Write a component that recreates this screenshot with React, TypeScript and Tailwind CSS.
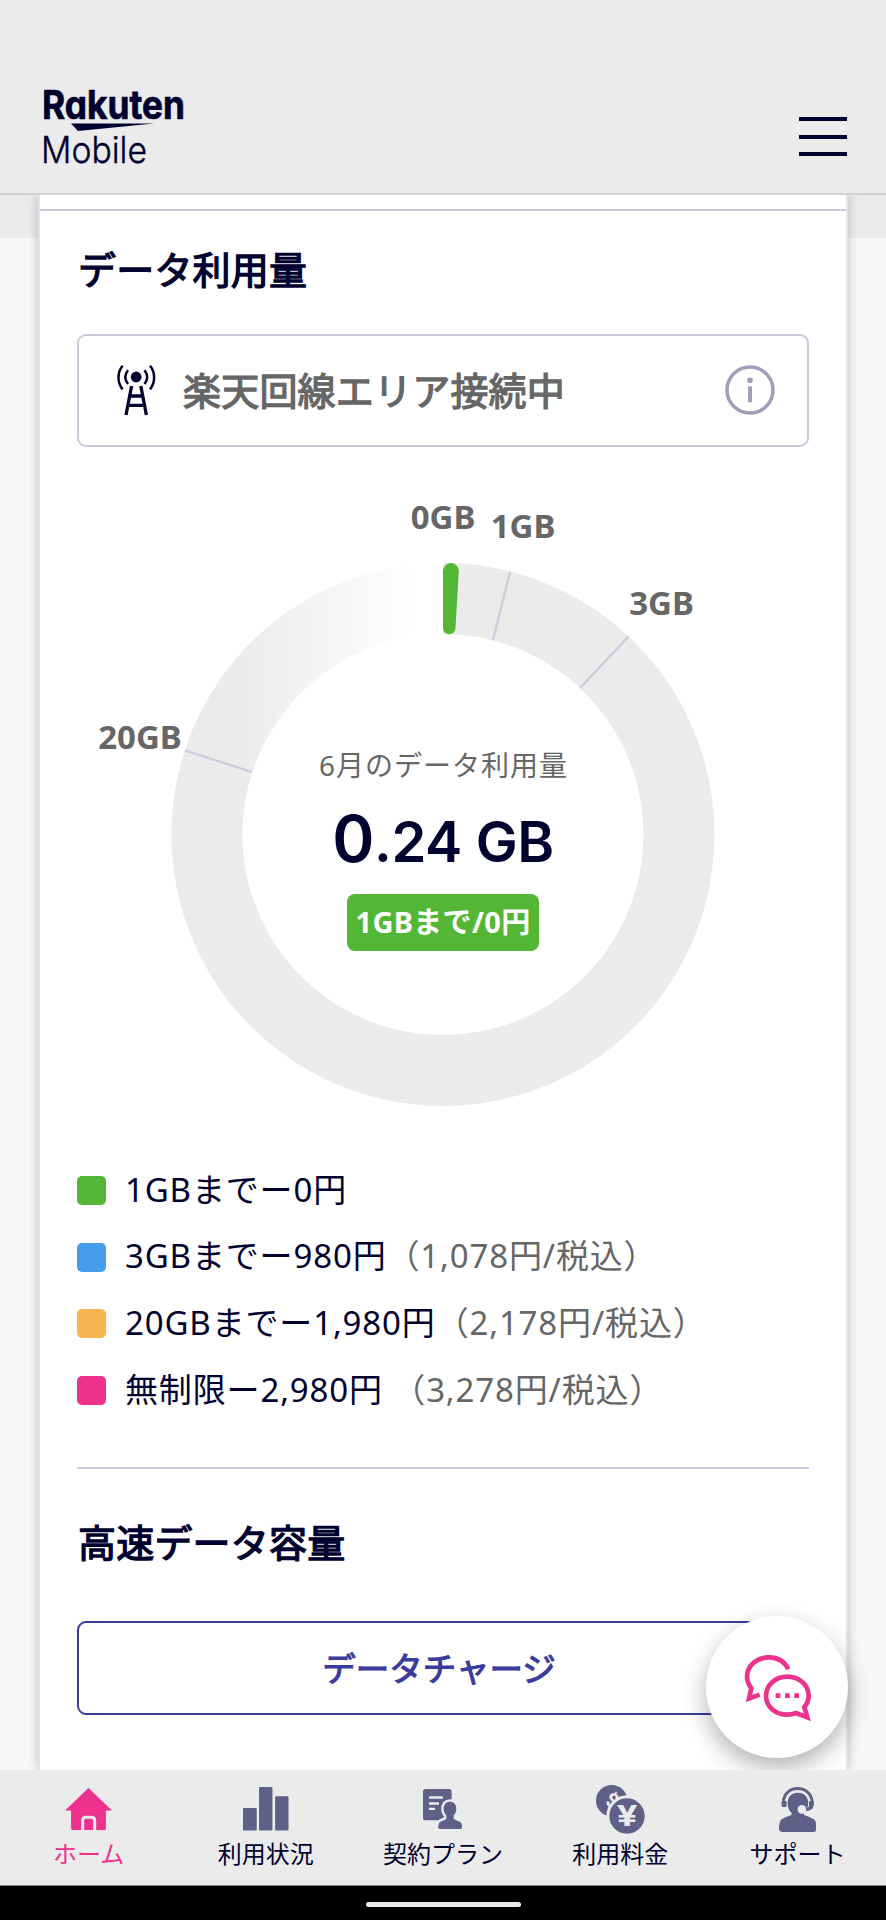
import type { ReactNode } from "react";

interface Plan {
  color: string;
  label: string;
  tax?: string;
}

const plans: Plan[] = [
  { color: "bg-[#53b735]", label: "1GBまでー0円" },
  { color: "bg-[#459eed]", label: "3GBまでー980円", tax: "（1,078円/税込）" },
  { color: "bg-[#f8b551]", label: "20GBまでー1,980円", tax: "（2,178円/税込）" },
  { color: "bg-[#ed318c]", label: "無制限ー2,980円", tax: " （3,278円/税込）" },
];

const Logo = () => (
  <svg width="176" height="114" viewBox="-16 -24 176 114" fill="#00002f">
    <text
      x="-1"
      y="33"
      fontSize="39.5"
      fontWeight="700"
      textLength="143"
      lengthAdjust="spacingAndGlyphs"
      stroke="#00002f"
      strokeWidth="0.7"
      className="font-['Inter'] [font-feature-settings:'cv11']"
    >
      Rakuten
    </text>
    <path d="M28 37.5H111L35 45Z" />
    <text
      x="-2"
      y="77"
      fontSize="37"
      fontWeight="300"
      textLength="106"
      lengthAdjust="spacingAndGlyphs"
      stroke="#00002f"
      strokeWidth="0.4"
      className="font-['Inter']"
    >
      Mobile
    </text>
  </svg>
);

const TowerIcon = () => (
  <svg width="39" height="51" viewBox="0 0 39 51" fill="none" stroke="#00002f">
    <circle cx="19.2" cy="12" r="5.4" fill="#00002f" stroke="none" />
    <path strokeWidth="3.3" d="M14.6 21 9 50M23.8 21l5.6 29M12.5 31h13.5M11 40.3h16.5" />
    <path
      strokeWidth="2.5"
      d="M5.6.8C.1 7.5.1 17.5 5.6 24.4M33 .8c5.5 6.7 5.5 16.7 0 23.6M11 5.2c-3.5 4.4-3.5 9.4 0 13.8M27.5 5.2c3.5 4.4 3.5 9.4 0 13.8"
    />
  </svg>
);

const InfoIcon = () => (
  <svg className="mb-0.5" width="50" height="50" viewBox="0 0 50 50" fill="#9f9fb9">
    <circle cx="25" cy="25" r="23" fill="none" stroke="#9f9fb9" strokeWidth="3.5" />
    <circle cx="25" cy="15.3" r="2.8" />
    <path d="M23 21.3h4v16h-4z" />
  </svg>
);

const HomeIcon = () => (
  <svg width="47" height="42.5" viewBox="0 0 140 127" fill="#ed318c">
    <path d="M70 0l70 67h-18v52q0 8-8 8H93V97q0-14-14-14H62q-14 0-14 14v30H26q-8 0-8-8V67H0z" />
    <path d="M57 127V98q0-6 6-6h15q6 0 6 6v29z" />
  </svg>
);

const UsageIcon = () => (
  <svg width="45.5" height="43.5" viewBox="0 0 136 130" fill="#5f5f87">
    <rect x="0" y="63" width="41" height="67" rx="3" />
    <rect x="48" y="0" width="40" height="130" rx="3" />
    <rect x="96" y="28" width="40" height="102" rx="3" />
  </svg>
);

const ContractIcon = () => (
  <svg width="39" height="40" viewBox="0 0 117 120" fill="#5f5f87">
    <rect width="86" height="94" rx="8" />
    <path fill="#ebebeb" d="M18 22h42v7H18zM18 40h30v7H18zM18 56h18v7H18z" />
    <path
      stroke="#ebebeb"
      strokeWidth="15"
      paintOrder="stroke"
      d="M81 38c11 0 19 8 19 21 0 10-4 16-8 20v10c2 3 17 7 21 11q4 4 4 12v3q0 5-5 5H51q-5 0-5-5v-3q0-8 4-12c4-4 18-8 20-11V79c-4-4-8-10-8-20 0-13 8-21 19-21z"
    />
  </svg>
);

const BillIcon = () => (
  <svg width="49" height="49" viewBox="0 0 147 147" fill="#5f5f87">
    <circle cx="47" cy="47" r="47" />
    <text
      x="49"
      y="66"
      fontSize="60"
      fontWeight="700"
      textAnchor="middle"
      fill="#ebebeb"
      transform="rotate(22 47 47)"
      className="font-['Roboto']"
    >
      $
    </text>
    <circle cx="93" cy="93" r="57.5" stroke="#ebebeb" strokeWidth="9" />
    <text
      x="63"
      y="124"
      fontSize="88"
      fontWeight="700"
      textLength="61"
      lengthAdjust="spacingAndGlyphs"
      fill="#ebebeb"
      className="font-['Roboto']"
    >
      ¥
    </text>
  </svg>
);

const SupportIcon = () => (
  <svg width="37.5" height="45" viewBox="0 0 113 135" fill="#5f5f87">
    <path d="M57 17c18 0 31 12 31 31 0 14-6 24-13 30v5c6 4 24 8 31 15q7 7 7 21v6q0 10-10 10H10q-10 0-10-10v-6q0-14 7-21c7-7 25-11 31-15v-5c-7-6-12-16-12-30 0-19 13-31 31-31z" />
    <path fill="none" stroke="#5f5f87" strokeWidth="9" d="M13 54V46C14 20 33 4.5 56 4.5S99 20 100 46v8" />
    <rect x="8" y="42" width="15" height="18" rx="4" />
    <path d="M90 43h14v12q0 13-15 16l-15 2v-8l12-3q5-2 5-7z" />
    <circle cx="69" cy="67" r="13" fill="#ebebeb" />
  </svg>
);

const ChatIcon = () => (
  <svg width="67" height="67" viewBox="0 0 201 201" fill="none" stroke="#ed318c" strokeWidth="14">
    <path d="M133 46C122 22 100 10 74 10 38 10 9 36 9 68c0 13 5 24 13 35l-7 31 32-12" />
    <path d="M130 68c-36 0-64 25-64 57s28 57 64 57c9 0 18-2 26-5l34 13-9-31c8-9 13-21 13-34 0-32-28-57-64-57z" />
    <path fill="#ed318c" stroke="none" d="M95 118h14v14H95zM123 118h14v14h-14zM151 118h14v14h-14z" />
  </svg>
);

const UsageChart = () => (
  <div className="relative mt-[33px] h-[640px]">
    <svg width="731" height="640" viewBox="77 480 731 640">
      <defs>
        <linearGradient id="fade" gradientUnits="userSpaceOnUse" x1="240" y1="0" x2="414" y2="0">
          <stop offset="0" stopColor="#ebebeb" />
          <stop offset="1" stopColor="#ffffff" />
        </linearGradient>
      </defs>
      <path
        fill="none"
        stroke="#ebebeb"
        strokeWidth="71"
        d="M443 598.5A236 236 0 1 1 218.5 761.5"
      />
      <path
        fill="none"
        stroke="url(#fade)"
        strokeWidth="71"
        d="M218 763A236 236 0 0 1 443 598.5"
      />
      <path stroke="#ccc9dc" strokeWidth="2.2" d="M510 572l-17 68M628.5 636.5l-48.5 51.5M185 750.5l67 21.5" />
      <path
        fill="#53b735"
        d="M443 571a7.9 7.9 0 0 1 15.8 0L455.5 628a6.25 6.25 0 0 1-12.5 0z"
      />
      <g
        fill="#666666"
        fontSize="33"
        fontWeight="700"
        textAnchor="middle"
        className="font-['Noto_Sans']"
      >
        <text x="443" y="528.5">0GB</text>
        <text x="523" y="538">1GB</text>
        <text x="661.5" y="614.5">3GB</text>
        <text x="140" y="748.5">20GB</text>
      </g>
    </svg>
    <div className="absolute inset-x-0 top-[262px] flex flex-col items-center">
      <p className="h-12 pl-px text-[28px] leading-[47px] tracking-[1px] text-[#666]">
        6月のデータ利用量
      </p>
      <p className="mt-3 h-[72px] font-['Inter'] text-[56px] leading-[74px] font-semibold tracking-[-0.4px] whitespace-nowrap">
        <span className="text-[64px]">0</span>.24 GB
      </p>
      <p className="mt-5 flex h-[57px] w-[192px] items-center justify-center rounded-lg bg-[#53b735] pb-0.5 text-[29px] font-bold tracking-[0.3px] text-white">
        1GBまで/0円
      </p>
    </div>
  </div>
);

interface NavItemProps {
  label: string;
  active?: boolean;
  children: ReactNode;
}
const NavItem = ({ label, active, children }: NavItemProps) => (
  <a className={`flex flex-col items-center ${active ? "text-[#ed318c]" : ""}`}>
    <span className="mt-[13px] flex h-[52px] items-center justify-center">{children}</span>
    <span className="mt-0.5 text-2xl leading-[34px]">{label}</span>
  </a>
);

export default function App() {
  return (
    <div className="relative flex h-[1920px] w-[886px] flex-col overflow-hidden bg-[#f7f7f7] font-['Noto_Sans','Noto_Sans_CJK_JP',sans-serif] text-[#00002f]">
      <header className="flex h-[195px] shrink-0 justify-between border-b-2 border-[#d0d0d0] bg-[#ebebeb] pr-[39px] pl-[27px]">
        <div className="pt-[62px]">
          <Logo />
        </div>
        <button className="mt-[117px] flex h-[39px] w-12 flex-col justify-between">
          <span className="h-1 w-full bg-[#00002f]" />
          <span className="h-1 w-full bg-[#00002f]" />
          <span className="h-1 w-full bg-[#00002f]" />
        </button>
      </header>

      <main className="h-[1575px] shrink-0 overflow-hidden bg-[linear-gradient(#ebebeb_43px,#f7f7f7_43px)] px-[38px]">
        <div className="h-full border-x-2 border-[#e3e3ea] bg-white shadow-[0_0_10px_rgba(0,0,0,0.22)]">
          <div className="h-4 border-b-2 border-[#ccc9dc]" />
          <div className="px-[37px]">
            <h2 className="mt-[31px] h-14 pl-px text-[38px] leading-[54px] tracking-[0.2px] [-webkit-text-stroke:1.3px]">
              データ利用量
            </h2>
            <div className="mt-9 flex h-[113px] items-center rounded-[9px] border-2 border-[#ccc9dc] pr-8 pl-[38px]">
              <TowerIcon />
              <span className="ml-[27px] flex-1 text-[38px] tracking-[0.2px] text-[#666] [-webkit-text-stroke:1.3px]">
                楽天回線エリア接続中
              </span>
              <InfoIcon />
            </div>

            <UsageChart />

            <ul className="mt-[37px]">
              {plans.map((plan) => (
                <li key={plan.label} className="flex h-[66.7px] items-center">
                  <span className={`h-[29px] w-[29px] rounded-[5px] ${plan.color}`} />
                  <span className="ml-[19px] pb-0.5 text-[33px] tracking-[0.85px] whitespace-pre">
                    {plan.label}
                    <span className="text-[#666]">{plan.tax}</span>
                  </span>
                </li>
              ))}
            </ul>

            <hr className="mt-[43px] h-0.5 border-0 bg-[#ccc9dc]" />
            <h2 className="mt-[46px] h-14 pl-px text-[38px] leading-[54px] tracking-[0.2px] [-webkit-text-stroke:1.3px]">
              高速データ容量
            </h2>
            <button className="mt-[50px] block h-[94px] w-full rounded-[9px] border-2 border-[#3b3b9d] pt-px pr-2 text-[33.5px] text-[#3b3b9d] [-webkit-text-stroke:1.1px]">
              データチャージ
            </button>
          </div>
        </div>
      </main>

      <button className="absolute top-[1616px] left-[706px] flex h-[142px] w-[142px] items-center justify-center rounded-full bg-white shadow-[0_10px_24px_rgba(0,0,0,0.3)]">
        <ChatIcon />
      </button>

      <nav className="relative grid h-[115px] shrink-0 grid-cols-5 bg-[#ebebeb]">
        <NavItem label="ホーム" active>
          <HomeIcon />
        </NavItem>
        <NavItem label="利用状況">
          <UsageIcon />
        </NavItem>
        <NavItem label="契約プラン">
          <ContractIcon />
        </NavItem>
        <NavItem label="利用料金">
          <BillIcon />
        </NavItem>
        <NavItem label="サポート">
          <SupportIcon />
        </NavItem>
      </nav>

      <footer className="flex h-[35px] shrink-0 justify-center border-t border-[#888] bg-black pt-4">
        <div className="h-[5px] w-[155px] rounded-full bg-[#ebebeb]" />
      </footer>
    </div>
  );
}
